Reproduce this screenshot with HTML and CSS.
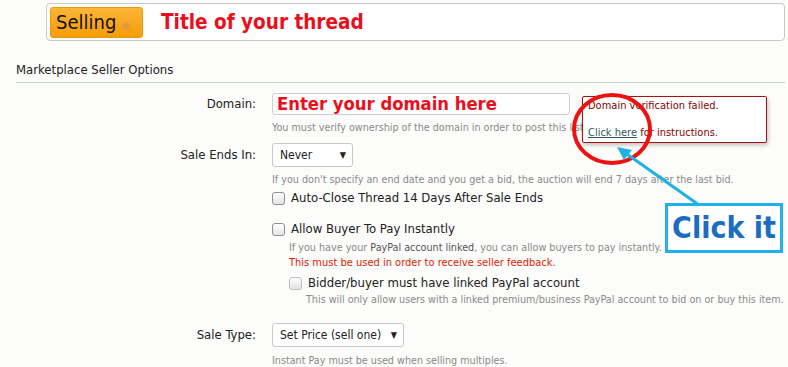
FILE: index.html
```html
<!DOCTYPE html>
<html>
<head>
    <title>Marketplace Seller Options</title>
    <link rel="stylesheet" href="styles.css">
</head>
<body>
    <div class="title-bar">
        <div class="prefix-button">Selling <span class="prefix-arrow"></span></div>
        <div class="thread-title">Title of your thread</div>
    </div>

    <h3 class="section-head">Marketplace Seller Options</h3>

    <div class="form">
        <div class="row row-domain">
            <label class="row-label">Domain:</label>
            <div class="row-control">
                <div class="text-input">Enter your domain here</div>
                <div class="hint">You must verify ownership of the domain in order to post this listing.</div>
            </div>
        </div>

        <div class="row row-select">
            <label class="row-label">Sale Ends In:</label>
            <div class="row-control">
                <div class="select select-never">Never <span class="caret">&#9660;</span></div>
                <div class="hint">If you don't specify an end date and you get a bid, the auction will end 7 days after the last bid.</div>
                <div class="check"><span class="box"></span>Auto-Close Thread 14 Days After Sale Ends</div>
                <div class="check check-pay"><span class="box"></span>Allow Buyer To Pay Instantly</div>
                <div class="sub">
                    <div class="hint">If you have your <span class="dark">PayPal account linked</span>, you can allow buyers to pay instantly.</div>
                    <div class="warn">This must be used in order to receive seller feedback.</div>
                    <div class="check check-bidder"><span class="box disabled"></span>Bidder/buyer must have linked PayPal account</div>
                    <div class="hint hint-bidder">This will only allow users with a linked premium/business PayPal account to bid on or buy this item.</div>
                </div>
            </div>
        </div>

        <div class="row row-type">
            <label class="row-label">Sale Type:</label>
            <div class="row-control">
                <div class="select select-type">Set Price (sell one) <span class="caret">&#9660;</span></div>
                <div class="hint">Instant Pay must be used when selling multiples.</div>
            </div>
        </div>
    </div>

    <div class="error-tip">
        <div>Domain verification failed.</div>
        <div class="error-gap"><a class="error-link">Click here</a> for instructions.</div>
    </div>

    <svg class="marks" width="788" height="367" viewBox="0 0 788 367">
        <ellipse cx="612" cy="129" rx="38" ry="34" fill="none" stroke="#ee1111" stroke-width="4"/>
        <line x1="699" y1="205" x2="624" y2="152" stroke="#1fb0e6" stroke-width="3"/>
        <path d="M617 147 L632 150 L624 160 Z" fill="#1fb0e6"/>
    </svg>

    <div class="callout">Click it</div>
</body>
</html>
```

FILE: styles.css
```css
body {
    margin: 0;
    background-color: #fcfcfa;
    font-family: "DejaVu Sans", sans-serif;
    font-stretch: condensed;
    color: #222222;
    width: 788px;
    height: 367px;
    overflow: hidden;
    position: relative;
}
.title-bar {
    margin: 3px 3px 0 46px;
    height: 36px;
    border: 1px solid #c9c9c9;
    border-radius: 4px;
    background-color: #ffffff;
    display: flex;
    align-items: center;
    padding-left: 3px;
}
.prefix-button {
    width: 86px;
    height: 29px;
    border: 1px solid #e89a10;
    border-radius: 3px;
    background: linear-gradient(#fbb537, #f59d08);
    font-size: 20px;
    line-height: 29px;
    padding-left: 5px;
    box-sizing: content-box;
    color: #111111;
    white-space: nowrap;
}
.prefix-arrow {
    display: inline-block;
    width: 8px;
    height: 8px;
    border-radius: 50%;
    background-color: #e39a3a;
    vertical-align: -1px;
}
.thread-title {
    margin-left: 18px;
    font-size: 20.5px;
    font-weight: bold;
    color: #ea0f1c;
}
.section-head {
    margin: 20px 3px 0 16px;
    padding-bottom: 3px;
    border-bottom: 1px solid #c6d4cf;
    font-size: 13px;
    font-weight: normal;
    line-height: 18px;
    color: #222222;
}
.form {
    margin-top: 10px;
}
.row {
    display: grid;
    grid-template-columns: 256px 1fr;
    column-gap: 16px;
}
.row-label {
    text-align: right;
    font-size: 13px;
    color: #222222;
    line-height: 22px;
}
.row-select .row-label,
.row-type .row-label {
    line-height: 24px;
}
.row-select {
    margin-top: 8px;
}
.row-type {
    margin-top: 16px;
}
.text-input {
    width: 292px;
    height: 20px;
    border: 1px solid #cfcfcf;
    border-radius: 3px;
    background-color: #ffffff;
    padding-left: 4px;
    font-size: 18.3px;
    font-weight: bold;
    line-height: 20px;
    color: #ea0f1c;
    white-space: nowrap;
    overflow: hidden;
}
.hint {
    font-size: 10.7px;
    line-height: 15px;
    color: #8a8a8a;
    margin-top: 5px;
    white-space: nowrap;
}
.hint .dark {
    color: #555555;
}
.select {
    height: 22px;
    border: 1px solid #c9c9c9;
    border-radius: 3px;
    background-color: #ffffff;
    font-size: 12px;
    line-height: 22px;
    padding-left: 7px;
    display: flex;
    justify-content: space-between;
    color: #222222;
    white-space: nowrap;
}
.select-never {
    width: 72px;
}
.select-type {
    width: 123px;
}
.caret {
    font-size: 9px;
    padding-right: 6px;
}
.check {
    display: flex;
    align-items: center;
    font-size: 13px;
    line-height: 18px;
    color: #222222;
    margin-top: 2px;
}
.check-pay {
    margin-top: 13px;
}
.box {
    width: 11px;
    height: 11px;
    border: 1px solid #8f8f8f;
    border-radius: 3px;
    background: linear-gradient(#ffffff, #e4e4e4);
    margin-right: 6px;
}
.box.disabled {
    border-color: #bdbdbd;
}
.sub {
    padding-left: 17px;
}
.sub .hint {
    margin-top: 2px;
}
.warn {
    font-size: 11px;
    line-height: 15px;
    color: #dd2200;
}
.check-bidder {
    margin-top: 4px;
}
.sub .hint-bidder {
    padding-left: 17px;
    margin-top: 0;
}
.row-type .hint {
    margin-top: 6px;
}
.error-tip {
    position: absolute;
    left: 582px;
    top: 96px;
    width: 178px;
    height: 40px;
    padding: 2px 0 3px 5px;
    border: 1px solid #a31515;
    border-radius: 2px;
    background-color: #ffffff;
    box-shadow: 1px 2px 4px rgba(0, 0, 0, 0.25);
    font-size: 11px;
    line-height: 14px;
    color: #8b0000;
}
.error-gap {
    margin-top: 13px;
}
.error-link {
    color: #2f5a5a;
    text-decoration: underline;
}
.marks {
    position: absolute;
    left: 0;
    top: 0;
}
.callout {
    position: absolute;
    left: 665px;
    top: 203px;
    width: 112px;
    height: 44px;
    border: 3px solid #22b2ea;
    background-color: #ffffff;
    font-size: 30px;
    font-weight: bold;
    line-height: 44px;
    text-align: center;
    color: #1a6dc0;
}
```
